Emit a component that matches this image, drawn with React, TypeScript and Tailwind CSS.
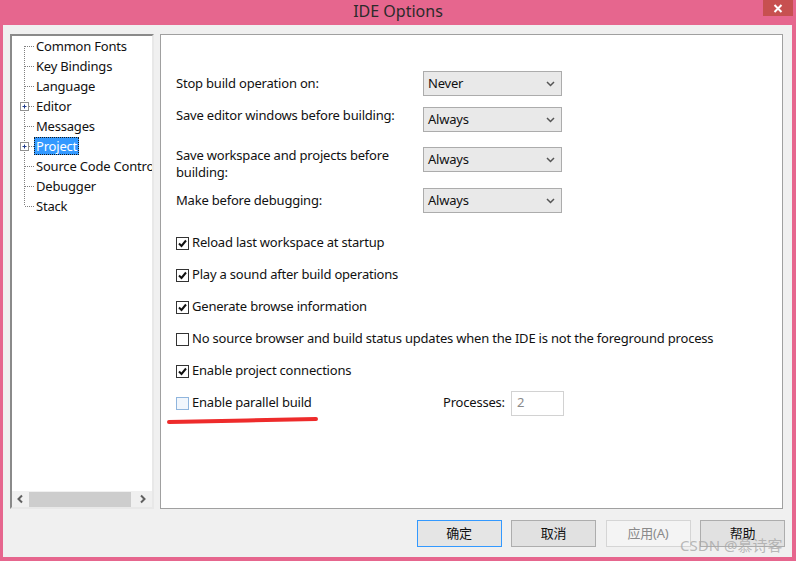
import React from 'react'

const font = { fontFamily: '"Noto Sans", "Noto Sans CJK SC", sans-serif' }

const treeItems = [
  { label: 'Common Fonts' },
  { label: 'Key Bindings' },
  { label: 'Language' },
  { label: 'Editor', plus: true },
  { label: 'Messages' },
  { label: 'Project', plus: true, selected: true },
  { label: 'Source Code Control' },
  { label: 'Debugger' },
  { label: 'Stack' },
]

function TreeLines() {
  return (
    <svg width="22" height="180" className="shrink-0 block">
      <line x1="12.5" y1="10" x2="12.5" y2="170" stroke="#808080" strokeWidth="1" strokeDasharray="1 1" />
      {treeItems.map((it, i) => (
        <g key={i}>
          <line x1="13" y1={10.5 + i * 20} x2="22" y2={10.5 + i * 20} stroke="#808080" strokeWidth="1" strokeDasharray="1 1" />
          {it.plus && (
            <g>
              <rect x="8.5" y={6.5 + i * 20} width="8" height="8" fill="#fff" stroke="#919191" />
              <line x1="10.5" y1={10.5 + i * 20} x2="14.5" y2={10.5 + i * 20} stroke="#1f3b8c" />
              <line x1="12.5" y1={8.5 + i * 20} x2="12.5" y2={12.5 + i * 20} stroke="#1f3b8c" />
            </g>
          )}
        </g>
      ))}
    </svg>
  )
}

function Tree() {
  return (
    <div className="w-[144px] h-[475px] shrink-0 border-2 border-t-[#8a8a8a] border-l-[#8a8a8a] border-r-[#e8e8e8] border-b-[#e8e8e8] bg-white flex flex-col">
      <div className="flex-1 flex overflow-hidden">
        <TreeLines />
        <div className="flex flex-col">
          {treeItems.map((it) => (
            <div key={it.label} className="h-[20px] flex items-center whitespace-nowrap">
              {it.selected ? (
                <span className="h-[18px] leading-[16px] px-[1px] bg-[#3399ff] text-white border border-dotted border-[#1a1a1a] text-[13px]">
                  {it.label}
                </span>
              ) : (
                <span className="pl-[2px] text-[13px] leading-[18px] text-[#111]">{it.label}</span>
              )}
            </div>
          ))}
        </div>
      </div>
      <div className="h-[16px] flex items-center bg-[#f0f0f0]">
        <svg width="17" height="16" className="shrink-0">
          <path d="M10 4.5 L6.5 8 L10 11.5" fill="none" stroke="#606060" strokeWidth="2" />
        </svg>
        <div className="w-[102px] h-[15px] bg-[#cdcdcd]" />
        <div className="flex-1" />
        <svg width="17" height="16" className="shrink-0">
          <path d="M6 4.5 L9.5 8 L6 11.5" fill="none" stroke="#606060" strokeWidth="2" />
        </svg>
      </div>
    </div>
  )
}

function Select({ value }: { value: string }) {
  return (
    <div className="w-[139px] h-[25px] shrink-0 border border-[#acacac] bg-[#e9e9e9] flex items-center pl-[4px] pr-[6px]">
      <span className="flex-1 text-[13px] text-[#111]">{value}</span>
      <svg width="9" height="6">
        <path d="M1 1 L4.5 4.5 L8 1" fill="none" stroke="#555" strokeWidth="1.5" />
      </svg>
    </div>
  )
}

function Checkbox({ checked, hover }: { checked: boolean; hover?: boolean }) {
  return (
    <div
      className={
        'w-[13px] h-[13px] shrink-0 border flex items-center justify-center ' +
        (hover ? 'border-[#8fb5dd] bg-[#f1f6fc]' : 'border-[#333] bg-white')
      }
    >
      {checked && (
        <svg width="11" height="11">
          <path d="M2 5.5 L4.5 8 L9 2.5" fill="none" stroke="#111" strokeWidth="2" />
        </svg>
      )}
    </div>
  )
}

function CheckRow({ label, checked, hover }: { label: string; checked: boolean; hover?: boolean }) {
  return (
    <div className="h-[20px] flex items-center gap-[3px]">
      <Checkbox checked={checked} hover={hover} />
      <span className="text-[13px] text-[#111] whitespace-nowrap">{label}</span>
    </div>
  )
}

function Button({ label, primary, disabled }: { label: string; primary?: boolean; disabled?: boolean }) {
  return (
    <div
      className={
        'w-[85px] h-[27px] flex items-center justify-center text-[13px] border ' +
        (disabled
          ? 'border-[#d5d5d5] bg-[#f4f4f4] text-[#8a8a8a]'
          : primary
          ? 'border-[#3399ff] bg-[#e5e5e5] text-[#111]'
          : 'border-[#adadad] bg-[#e1e1e1] text-[#111]')
      }
    >
      {label}
    </div>
  )
}

export default function App() {
  return (
    <div className="w-[796px] h-[561px] bg-[#e6668e] flex flex-col relative tracking-[-0.2px]" style={font}>
      {/* title bar */}
      <div className="h-[25px] shrink-0 flex items-start relative">
        <div className="flex-1 text-center text-[16px] text-[#2b2b2b] leading-[22px] tracking-normal">IDE Options</div>
        <div className="absolute right-[3px] top-0 w-[30px] h-[16px] bg-[#c75050] flex items-center justify-center">
          <svg width="10" height="9">
            <path d="M1.5 1 L8.5 8 M8.5 1 L1.5 8" stroke="#fff" strokeWidth="2" />
          </svg>
        </div>
      </div>

      {/* client */}
      <div className="flex-1 ml-[3px] mr-[4px] mb-[4px] bg-[#f0f0f0] flex flex-col pl-[7px] pt-[9px]">
        <div className="flex gap-[6px]">
          <Tree />
          <div className="w-[623px] h-[475px] border border-[#a0a0a0] bg-white pl-[15px]">
            <div className="mt-[36px] flex">
              <div className="w-[247px] pt-[4px] text-[13px] leading-[17px] text-[#111]">Stop build operation on:</div>
              <Select value="Never" />
            </div>
            <div className="mt-[11px] flex">
              <div className="w-[247px] text-[13px] leading-[17px] text-[#111]">Save editor windows before building:</div>
              <Select value="Always" />
            </div>
            <div className="mt-[15px] flex">
              <div className="w-[247px] pr-[25px] text-[13px] leading-[17px] text-[#111]">
                Save workspace and projects before building:
              </div>
              <Select value="Always" />
            </div>
            <div className="mt-[7px] flex">
              <div className="w-[247px] pt-[4px] text-[13px] leading-[17px] text-[#111]">Make before debugging:</div>
              <Select value="Always" />
            </div>

            <div className="mt-[20px] flex flex-col gap-[12px]">
              <CheckRow label="Reload last workspace at startup" checked />
              <CheckRow label="Play a sound after build operations" checked />
              <CheckRow label="Generate browse information" checked />
              <CheckRow
                label="No source browser and build status updates when the IDE is not the foreground process"
                checked={false}
              />
              <CheckRow label="Enable project connections" checked />
              <div className="h-[20px] flex items-center">
                <div className="w-[267px]">
                  <CheckRow label="Enable parallel build" checked={false} hover />
                </div>
                <span className="text-[13px] text-[#111]">Processes:</span>
                <div className="ml-[6px] w-[53px] h-[25px] border border-[#d2d2d2] bg-white text-[13px] text-[#8a8a8a] pl-[5px] leading-[20px]">
                  2
                </div>
              </div>
            </div>
            <svg width="152" height="10" className="block ml-[-9px] mt-[2px]">
              <path
                d="M2 7 C 30 6.5, 60 6, 80 5.5 C 100 5, 120 4.5, 149 4"
                fill="none"
                stroke="#ee2b2b"
                strokeWidth="4"
                strokeLinecap="round"
              />
            </svg>
          </div>
        </div>

        <div className="mt-[11px] flex justify-end gap-[9.5px] pr-[7px]">
          <Button label="确定" primary />
          <Button label="取消" />
          <Button label="应用(A)" disabled />
          <Button label="帮助" />
        </div>
      </div>

      <div className="absolute left-[680px] top-[534px] text-[15px] text-[#a8a8a8]/80 whitespace-nowrap tracking-normal">
        CSDN @慕诗客
      </div>
    </div>
  )
}
